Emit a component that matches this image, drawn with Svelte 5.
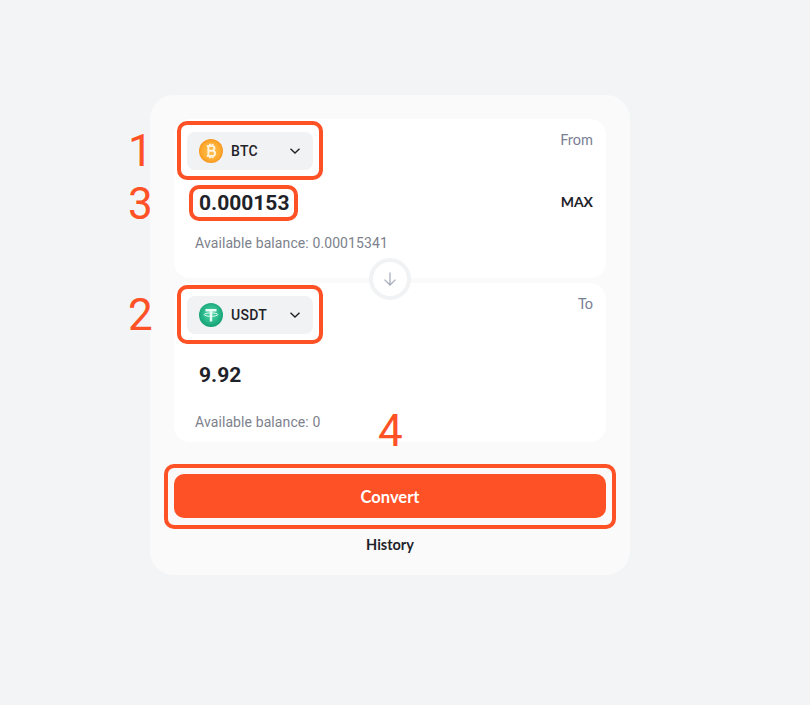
<script lang="ts">
  interface Panel {
    coin: string;
    side: string;
    amount: string;
    balance: string;
    max?: boolean;
  }

  const panels: Panel[] = [
    { coin: "BTC", side: "From", amount: "0.000153", balance: "0.00015341", max: true },
    { coin: "USDT", side: "To", amount: "9.92", balance: "0" },
  ];
</script>

<main class="page">
  <section class="card">
    <div class="panels">
      {#each panels as p}
        <div class="panel" class:to={!p.max}>
          <div class="top">
            <button class="select">
              {#if p.coin === "BTC"}
                <svg class="coin" viewBox="0 0 24 24">
                  <defs>
                    <radialGradient id="btc" cx="50%" cy="50%" r="55%">
                      <stop offset="0" stop-color="#ffc04d" />
                      <stop offset="0.7" stop-color="#fdaa2f" />
                      <stop offset="1" stop-color="#f4901c" />
                    </radialGradient>
                  </defs>
                  <circle cx="12" cy="12" r="12" fill="url(#btc)" />
                  <path d="M9.400 7h3.700c1.400 0 2.300.9 2.300 2.300s-.9 2.400-2.300 2.400H9.400m0 0h4.100c1.600 0 2.500 1 2.500 2.600s-.9 2.700-2.500 2.700H9.400M9.400 6v12M7.800 7h2.400M7.800 17h2.400M11 4.800v2.200M13.600 4.800v2.200M11 17v2.200M13.600 17v2.200" fill="none" stroke="#fff3dc" stroke-width="2" />
                </svg>
              {:else}
                <svg class="coin" viewBox="0 0 24 24">
                  <defs>
                    <radialGradient id="usdt" cx="50%" cy="45%" r="60%">
                      <stop offset="0" stop-color="#4fdcae" />
                      <stop offset="1" stop-color="#0d9a6e" />
                    </radialGradient>
                  </defs>
                  <circle cx="12" cy="12" r="12" fill="url(#usdt)" />
                  <path d="M6.500 7.200h11M12 7.200V18.500" fill="none" stroke="#e9fcf4" stroke-width="2.400" />
                  <ellipse cx="12" cy="11.600" rx="6.800" ry="1.700" fill="none" stroke="#e9fcf4" stroke-width="1" />
                </svg>
              {/if}
              <span class="name">{p.coin}</span>
              <svg class="chev" viewBox="0 0 12 8">
                <path d="M1.500 1.800 6 6l4.500-4.200" fill="none" stroke="#1f2329" stroke-width="1.400" />
              </svg>
            </button>
            <span class="side">{p.side}</span>
          </div>
          <div class="amount-row">
            <span class="amount">{p.amount}</span>
            {#if p.max}<span class="max">MAX</span>{/if}
          </div>
          <div class="balance">Available balance: {p.balance}</div>
        </div>
      {/each}

      <div class="swap">
        <svg viewBox="0 0 16 16" width="16" height="16">
          <path d="M8 1.500v12.500M2.500 8.600 8 14l5.500-5.400" fill="none" stroke="#a9aebd" stroke-width="1.300" />
        </svg>
      </div>
    </div>

    <button class="convert">Convert</button>
    <div class="history">History</div>
  </section>

  <!-- tutorial annotations drawn over the screenshot -->
  <div class="box" style="left:177px;top:121px;width:146px;height:59px"></div>
  <div class="box" style="left:189px;top:185px;width:109px;height:36px"></div>
  <div class="box" style="left:177px;top:285px;width:146px;height:59px"></div>
  <div class="box" style="left:164px;top:464px;width:452px;height:65px"></div>
  <span class="num" style="left:128px;top:126px">1</span>
  <span class="num" style="left:128px;top:290px">2</span>
  <span class="num" style="left:128px;top:179px">3</span>
  <span class="num" style="left:378px;top:406px">4</span>
</main>

<style>
  :global(body) {
    margin: 0;
    background: #f3f4f6;
  }

  .page {
    position: relative;
    height: 705px;
    padding-top: 95px;
    box-sizing: border-box;
    font-family: "Roboto", "Liberation Sans", sans-serif;
  }

  .card {
    width: 480px;
    height: 480px;
    margin-left: 150px;
    padding: 24px;
    box-sizing: border-box;
    background: #fafafa;
    border-radius: 24px;
  }

  .panels {
    position: relative;
    display: flex;
    flex-direction: column;
    gap: 5px;
  }

  .panel {
    height: 159px;
    padding: 13px 13px 0;
    box-sizing: border-box;
    background: #fff;
    border-radius: 16px;
  }

  .top {
    display: flex;
    justify-content: space-between;
  }

  .select {
    display: flex;
    align-items: center;
    width: 126px;
    height: 38px;
    padding: 0 12px;
    border: none;
    border-radius: 8px;
    background: #f1f2f4;
    font-family: inherit;
    cursor: pointer;
  }

  .coin {
    width: 24px;
    height: 24px;
    flex: none;
  }

  .name {
    margin-left: 8px;
    font-size: 14px;
    font-weight: 500;
    letter-spacing: 0.3px;
    color: #1f2329;
  }

  .chev {
    width: 12px;
    height: 8px;
    margin-left: auto;
  }

  .side {
    font-family: "Lato", sans-serif;
    font-size: 14.5px;
    line-height: 16px;
    color: #7a8094;
  }

  .amount-row {
    display: flex;
    align-items: center;
    justify-content: space-between;
    height: 28px;
    margin-top: 19px;
    padding-left: 12px;
  }

  .to .amount-row {
    margin-top: 27px;
  }

  .amount {
    font-size: 21px;
    font-weight: 700;
    color: #1f2329;
  }

  .max {
    margin-bottom: 3px;
    font-family: "Lato", sans-serif;
    font-size: 14px;
    font-weight: 700;
    color: #1f2329;
  }

  .balance {
    margin-top: 18px;
    padding-left: 8px;
    font-size: 14px;
    line-height: 16px;
    letter-spacing: 0.1px;
    color: #7d818c;
  }

  .to .balance {
    margin-top: 25px;
  }

  .swap {
    position: absolute;
    left: 195px;
    top: 139px;
    display: flex;
    align-items: center;
    justify-content: center;
    width: 42px;
    height: 42px;
    box-sizing: border-box;
    background: #fff;
    border: 4px solid #f1f2f4;
    border-radius: 50%;
  }

  .convert {
    display: block;
    width: 432px;
    height: 44px;
    margin-top: 32px;
    padding: 2px 0 0;
    border: none;
    border-radius: 10px;
    background: #ff5126;
    color: #fff;
    font-family: "Lato", sans-serif;
    font-size: 16.5px;
    font-weight: 700;
    cursor: pointer;
  }

  .history {
    margin-top: 18px;
    text-align: center;
    font-family: "Lato", sans-serif;
    font-size: 14.5px;
    line-height: 18px;
    font-weight: 700;
    color: #1f2329;
  }

  .box {
    position: absolute;
    box-sizing: border-box;
    border: 4px solid #ff5126;
    border-radius: 10px;
  }

  .num {
    position: absolute;
    font-family: "Roboto", sans-serif;
    font-size: 44px;
    line-height: 50px;
    font-weight: 400;
    color: #ff5126;
  }
</style>
